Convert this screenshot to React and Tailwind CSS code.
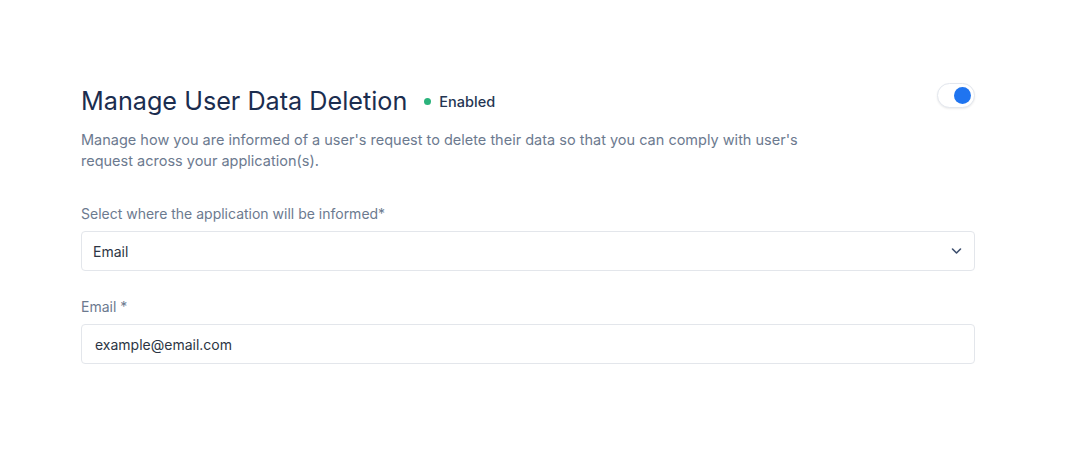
import React, { useState } from 'react';

// --- Data deletion settings panel ---
const App = () => {
  const [enabled, setEnabled] = useState(true);
  const [channel, setChannel] = useState('Email');
  const [email, setEmail] = useState('example@email.com');

  return (
    <div className="min-h-screen w-full bg-white font-['Inter','Liberation_Sans',sans-serif]">
      <div className="ml-[81px] w-[894px] pt-[85px]">
        {/* Header */}
        <div className="flex items-start justify-between">
          <div className="flex items-center">
            <h1 className="text-[25.2px] leading-[32px] text-[#1b2d4f]">Manage User Data Deletion</h1>
            <span className="ml-[17px] mt-[1px] h-[7px] w-[7px] rounded-full bg-[#2bb37c]" />
            <span className="ml-[8px] mt-[1px] text-[14.5px] font-medium text-[#243552]">Enabled</span>
          </div>
          <button
            onClick={() => setEnabled(!enabled)}
            className="-mt-[2px] flex h-[25px] w-[38px] items-center rounded-full border border-[#e3e7ee] bg-white px-[3px] shadow-[0_1px_2px_rgba(0,0,0,0.08)]"
          >
            <span className={`h-[17px] w-[17px] rounded-full bg-[#1f74f0] transition ${enabled ? 'ml-auto' : ''}`} />
          </button>
        </div>

        <p className="mt-[12px] w-[740px] text-[14.5px] leading-[21px] text-[#6c7a8f]">
          Manage how you are informed of a user's request to delete their data so that you can comply with user's request across your application(s).
        </p>

        {/* Channel select */}
        <label className="mt-[33px] block text-[14px] leading-[20px] text-[#6c7a8f]">Select where the application will be informed*</label>
        <div className="relative mt-[7px]">
          <select
            value={channel}
            onChange={(e) => setChannel(e.target.value)}
            className="h-[40px] w-full appearance-none rounded-[4px] border border-[#e3e6eb] bg-white px-[11px] text-[14px] text-[#2c3544] outline-none"
          >
            <option>Email</option>
            <option>Webhook</option>
          </select>
          <svg className="pointer-events-none absolute right-[13px] top-[16px]" width="11" height="8" viewBox="0 0 11 8" fill="none">
            <path d="M1.5 2l4 4 4-4" stroke="#3d4f6e" strokeWidth="1.6" strokeLinecap="round" strokeLinejoin="round" />
          </svg>
        </div>

        {/* Email input */}
        <label className="mt-[26px] block text-[14px] leading-[20px] text-[#6c7a8f]">Email *</label>
        <input
          value={email}
          onChange={(e) => setEmail(e.target.value)}
          className="mt-[7px] h-[40px] w-full rounded-[4px] border border-[#e3e6eb] bg-white px-[13px] text-[14px] text-[#2c3544] outline-none"
        />
      </div>
    </div>
  );
};

export default App;
